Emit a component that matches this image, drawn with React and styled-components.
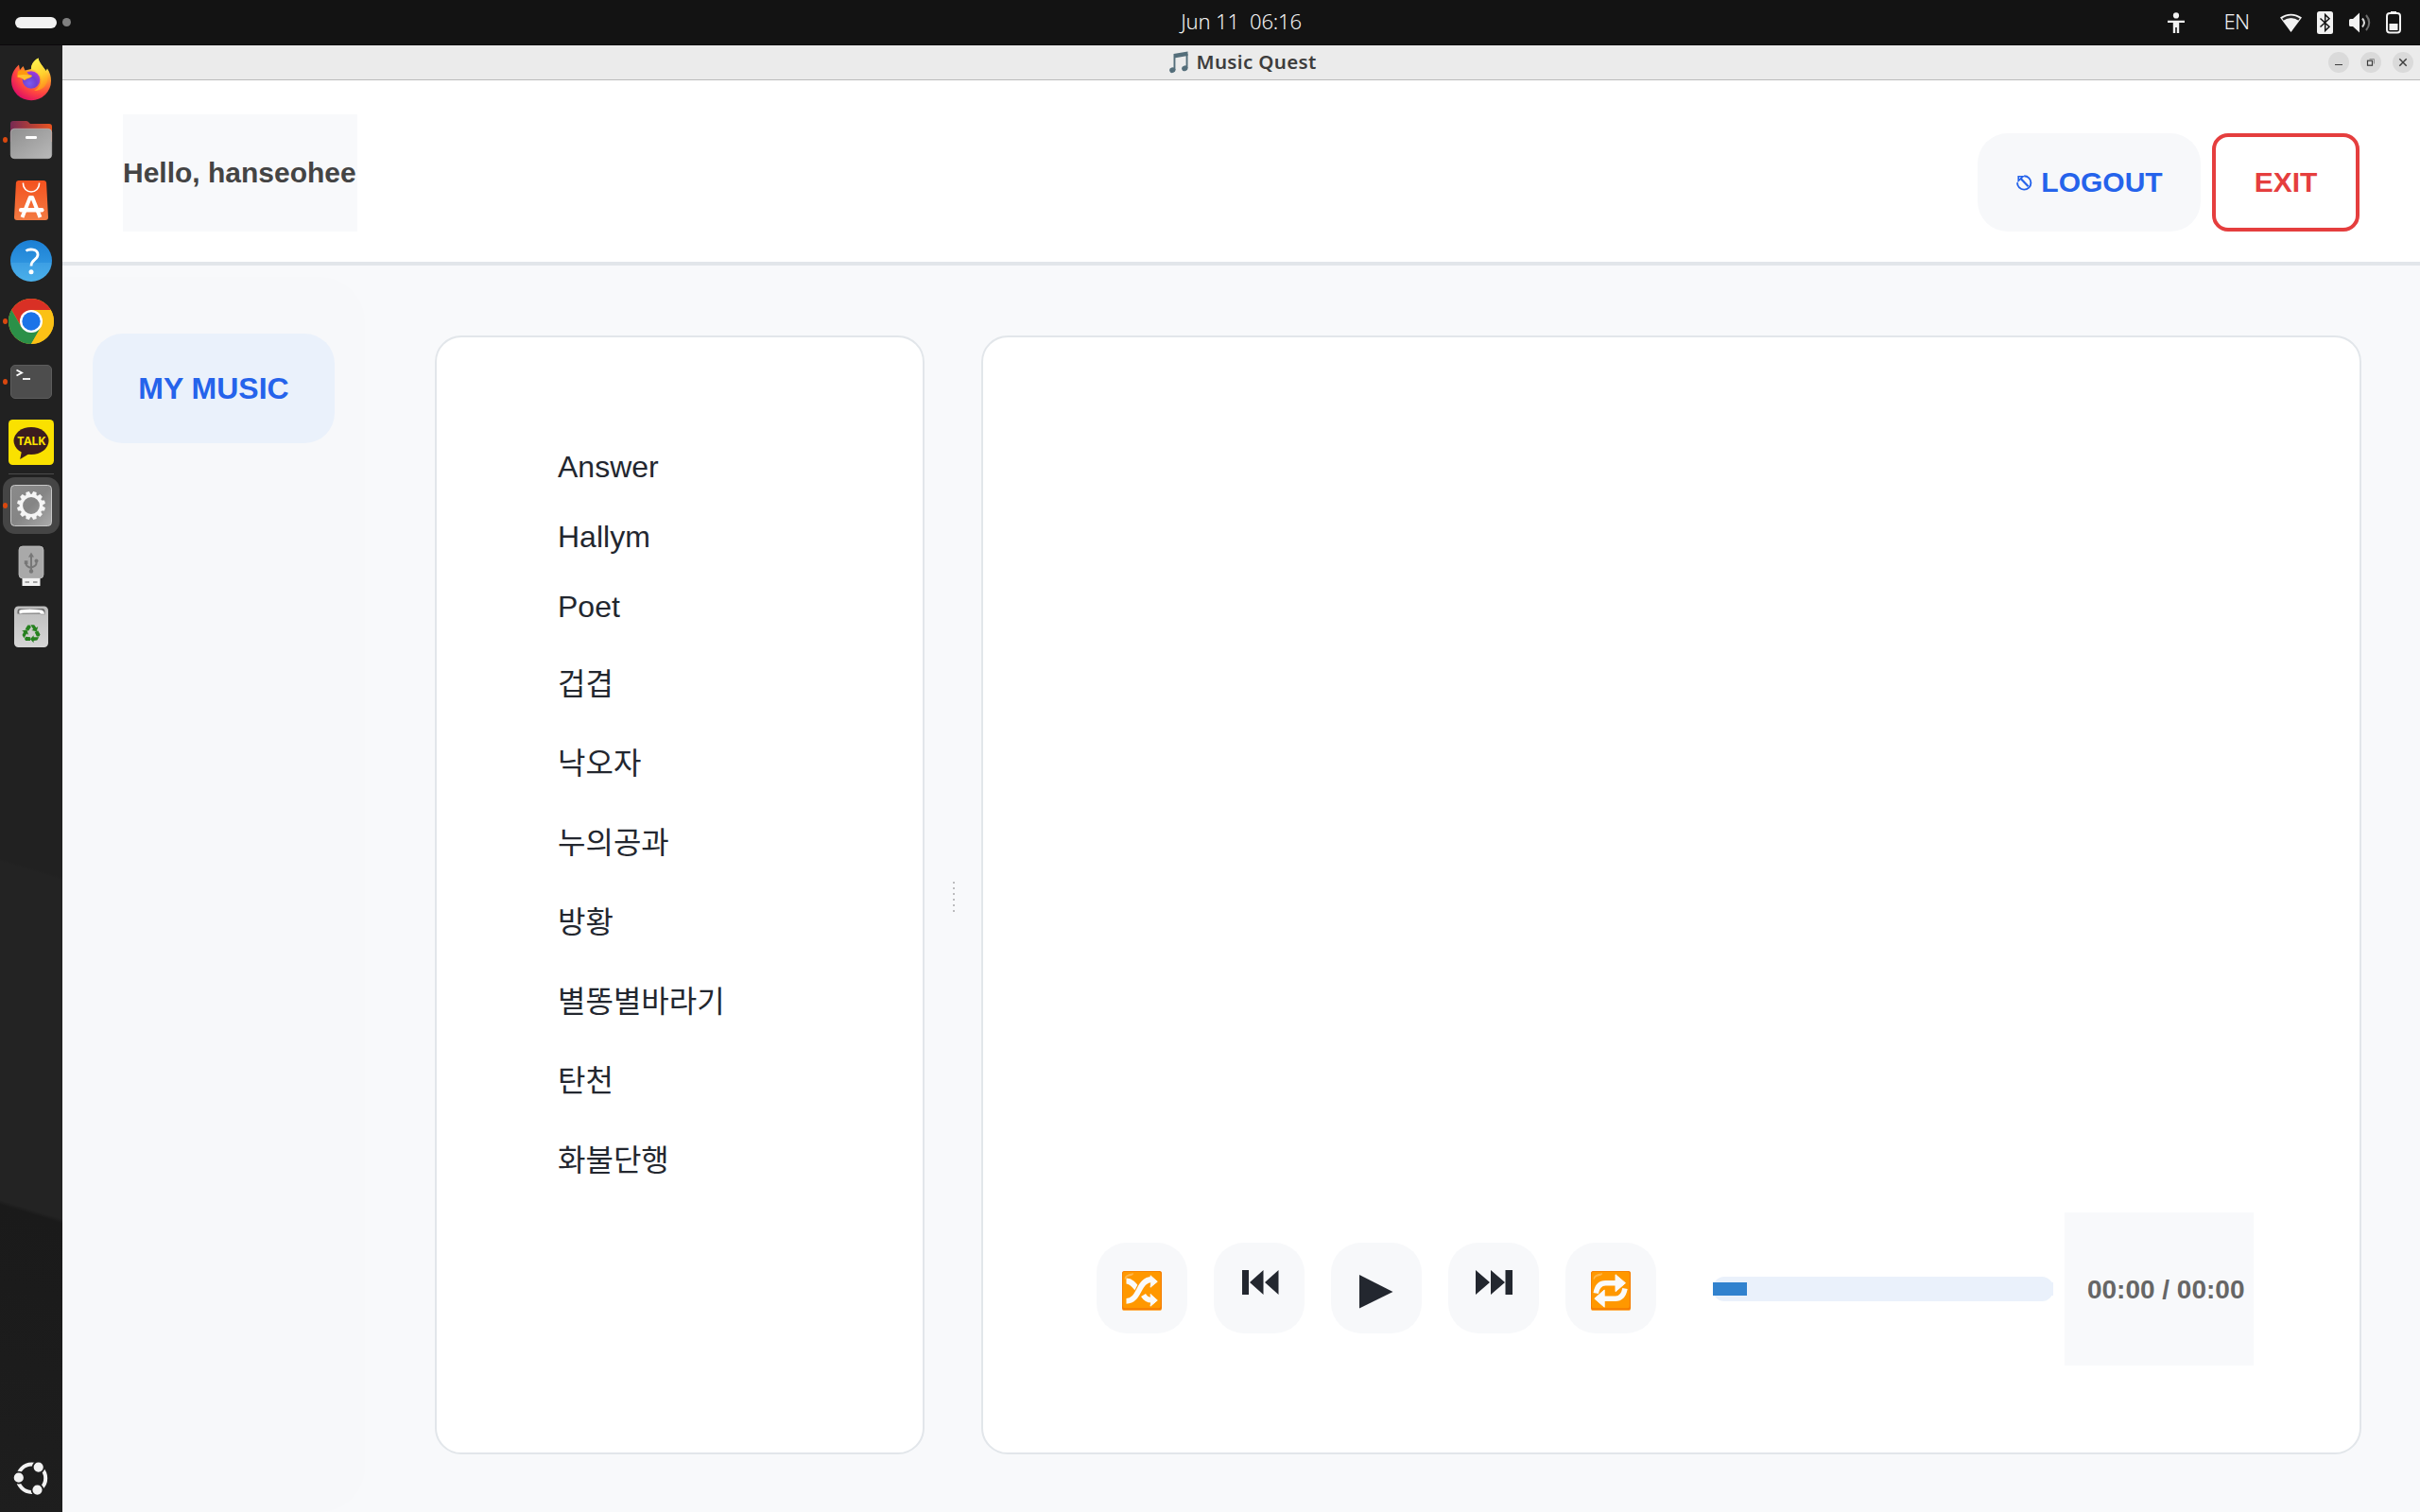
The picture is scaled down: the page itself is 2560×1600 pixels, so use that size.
import React from "react";
import styled, { createGlobalStyle } from "styled-components";

const GlobalStyle = createGlobalStyle`
  html, body, #root { margin: 0; height: 100%; }
  body { overflow: hidden; background: #f8f9fb; }
  * { box-sizing: border-box; }
  svg { display: block; flex: none; }
  button { font: inherit; padding: 0; border: 0; cursor: pointer; }
`;

const UI = `"Liberation Sans", "Noto Sans CJK KR", sans-serif`;
const SHELL = `"Noto Sans", "Open Sans", sans-serif`;

const Screen = styled.div`
  width: 2560px;
  height: 1600px;
  display: flex;
  flex-direction: column;
  font-family: ${UI};
`;

/* ---------- system bar ---------- */
const TopBar = styled.header`
  height: 48px;
  flex: none;
  display: grid;
  grid-template-columns: 1fr auto 1fr;
  align-items: center;
  background: #131313;
  border-bottom: 1px solid #0c080c;
  color: #f2f2f2;
  font-family: ${SHELL};
`;
const Workspaces = styled.div`
  display: flex;
  align-items: center;
  gap: 6px;
  padding-left: 16px;
`;
const ActiveSpace = styled.span`
  width: 44px;
  height: 12px;
  border-radius: 6px;
  background: #f2f2f2;
`;
const Space = styled.span`
  width: 9px;
  height: 9px;
  border-radius: 50%;
  background: #808080;
`;
const Clock = styled.time`
  width: 134px;
  margin-left: 66px;
  padding-bottom: 3px;
  font-size: 22px;
  line-height: 44px;
  font-weight: 300;
  letter-spacing: -0.15px;
  white-space: pre;
  text-align: center;
`;
const Tray = styled.div`
  display: flex;
  justify-content: flex-end;
  align-items: center;
  gap: 16.5px;
  padding-right: 20px;
`;
const Lang = styled.span`
  width: 26px;
  margin: 0 16.5px 0 25px;
  padding-bottom: 3px;
  font-size: 22px;
  font-weight: 300;
  line-height: 44px;
  letter-spacing: -0.6px;
`;

const Desktop = styled.div`
  flex: 1;
  min-height: 0;
  display: flex;
`;

/* ---------- dock ---------- */
const Dock = styled.nav`
  width: 66px;
  flex: none;
  display: flex;
  flex-direction: column;
  align-items: center;
  padding: 4px 0 4px;
  background: linear-gradient(197deg, #212121 0, #212121 56%, #232323 56.2%, #232323 79%, #1a1a1a 79.3%, #1e1e1e 100%);
`;
const Slot = styled.div`
  position: relative;
  width: 60px;
  height: ${(p) => (p.$active ? 60 : 64)}px;
  margin: ${(p) => (p.$active ? "2px 0" : 0)};
  flex: none;
  display: flex;
  align-items: center;
  justify-content: center;
  border-radius: 13px;
  background: ${(p) => (p.$active ? "#454545" : "transparent")};
`;
const RunDot = styled.i`
  position: absolute;
  left: 0;
  top: calc(50% - 3px);
  width: 5px;
  height: 6px;
  border-radius: 50%;
  background: #d9480f;
`;
const DockRule = styled.hr`
  width: 48px;
  height: 1px;
  margin: 1px 0;
  border: 0;
  background: #4c4c4c;
`;
const DockFill = styled.div`
  flex: 1;
`;

/* ---------- window ---------- */
const Window = styled.div`
  flex: 1;
  min-width: 0;
  display: flex;
  flex-direction: column;
  background: #f8f9fb;
`;
const TitleBar = styled.div`
  height: 37px;
  flex: none;
  display: grid;
  grid-template-columns: 1fr auto 1fr;
  align-items: center;
  background: #ebebeb;
  border-bottom: 1px solid #bababa;
  font-family: ${SHELL};
`;
const Title = styled.h1`
  grid-column: 2;
  display: flex;
  align-items: center;
  gap: 9px;
  width: 158px;
  margin: 0 0 0 5px;
  padding-bottom: 1px;
  font-size: 20.500px;
  line-height: 33px;
  font-weight: 600;
  letter-spacing: 0.35px;
  color: #3d3d3d;
  white-space: nowrap;
`;
const WindowButtons = styled.div`
  display: flex;
  justify-content: flex-end;
  gap: 12px;
  padding-right: 7px;
`;
const WindowButton = styled.button`
  width: 22px;
  height: 22px;
  border-radius: 50%;
  background: #dadada;
`;

const Header = styled.section`
  height: 196px;
  flex: none;
  display: flex;
  justify-content: space-between;
  align-items: flex-end;
  padding: 0 64px 32px;
  background: #fff;
  border-bottom: 4px solid #e2e6ea;
`;
const Greeting = styled.div`
  width: 248px;
  height: 124px;
  display: flex;
  align-items: center;
  background: #f8f9fb;
  color: #444;
  font-size: 30px;
  font-weight: 700;
  white-space: nowrap;
`;
const Actions = styled.div`
  display: flex;
  gap: 12px;
`;
const ActionButton = styled.button`
  height: 104px;
  width: ${(p) => (p.$danger ? 156 : 236)}px;
  display: flex;
  align-items: center;
  justify-content: center;
  gap: 8px;
  border: ${(p) => (p.$danger ? "4px solid #e53e3e" : "0")};
  border-radius: ${(p) => (p.$danger ? 17 : 32)}px;
  background: ${(p) => (p.$danger ? "#fff" : "#f7f8fa")};
  color: ${(p) => (p.$danger ? "#e53e3e" : "#2563eb")};
  font-size: 30px;
  font-weight: 700;
`;

const Body = styled.main`
  flex: 1;
  min-height: 0;
  display: flex;
`;
const Sidebar = styled.aside`
  width: 320px;
  flex: none;
  margin: 12px 0 0;
  padding: 60px 32px 0;
  border-radius: 0 48px 48px 0;
  background: #f7f8fa;
`;
const NavButton = styled.button`
  width: 256px;
  height: 116px;
  border-radius: 32px;
  background: #eaf1fb;
  color: #2563eb;
  font-size: 32px;
  font-weight: 700;
`;
const Splitter = styled.div`
  flex: 1;
  min-width: 0;
  display: flex;
  padding: 74px 62px 61px 74px;
`;
const Panel = styled.section`
  width: ${(p) => (p.$grow ? "auto" : "518px")};
  flex: ${(p) => (p.$grow ? "1" : "none")};
  min-width: 0;
  display: flex;
  flex-direction: column;
  justify-content: ${(p) => (p.$grow ? "flex-end" : "flex-start")};
  padding: ${(p) => (p.$grow ? "0 112px 92px 120px" : "100px 0 0 128px")};
  border: 2px solid #e2e6ea;
  border-radius: 28px;
  background: #fff;
`;
const Handle = styled.div`
  width: 60px;
  flex: none;
  display: flex;
  flex-direction: column;
  align-items: center;
  justify-content: center;
  gap: 4px;
  padding: 3px 0 0 2px;
`;
const Grip = styled.i`
  width: 2px;
  height: 2px;
  background: #bcbcbe;
`;
const Songs = styled.ul`
  list-style: none;
  margin: 0;
  padding: 0;
`;
const Song = styled.li`
  height: ${(p) => (p.$hangul ? 84 : 74.3)}px;
  display: flex;
  align-items: center;
  padding-bottom: ${(p) => (p.$hangul ? 2 : 0)}px;
  font-size: 32px;
  color: #23272f;
`;

/* ---------- player ---------- */
const Player = styled.div`
  height: 162px;
  display: flex;
  align-items: center;
`;
const Controls = styled.div`
  display: flex;
  gap: 28px;
  margin-bottom: 2px;
`;
const Control = styled.button`
  width: 96px;
  height: 96px;
  border-radius: 32px;
  background: #f7f8fa;
  display: flex;
  justify-content: flex-start;
  align-items: flex-start;
  padding-top: ${(p) => p.$top}px;
  padding-left: ${(p) => p.$left}px;
`;
const Track = styled.div`
  width: 360px;
  height: 26px;
  margin: 0 12px 0 60px;
  display: flex;
  align-items: center;
  background:
    linear-gradient(#eaf1fb, #eaf1fb) right center / 12px 14px no-repeat;
`;
const Rail = styled.div`
  flex: 1;
  height: 26px;
  display: flex;
  align-items: center;
  border-radius: 12px;
  background: #eaf1fb;
`;
const Chunk = styled.div`
  width: 36px;
  height: 14px;
  background: #3182ce;
`;
const Time = styled.div`
  width: 200px;
  height: 162px;
  display: flex;
  align-items: center;
  justify-content: flex-end;
  padding: 2px 9.5px 0 0;
  background: #f8f9fb;
  color: #666;
  font-size: 28px;
  font-weight: 700;
  white-space: nowrap;
`;

/* ---------- drawings ---------- */
const Person = () => (
  <svg width="18" height="24" viewBox="0 0 18 24" fill="#f2f2f2">
    <circle cx="9" cy="4.4" r="3.1" />
    <path d="M0 9.7h18v2.2h-5.800V23H9.800v-6H8.200v6H5.800V11.900H0z" />
  </svg>
);
const Wifi = () => (
  <svg width="23" height="24" viewBox="0 0 23 24">
    <path d="M0 6.600C6.500 1.400 16.500 1.400 23 6.600L11.500 22z" fill="#f2f2f2" />
    <path d="M2.200 7.600C8 3.500 15 3.500 20.800 7.600L19 10C14.500 6.500 8.500 6.500 4 10z" fill="#131313" opacity=".92" />
    <path d="M3.500 9.800C8.500 6.500 14.500 6.500 19.500 9.800L11.500 21.500z" fill="#f2f2f2" />
  </svg>
);
const Bluetooth = () => (
  <svg width="17" height="24" viewBox="0 0 17 24">
    <rect width="17" height="24" rx="2.500" fill="#f2f2f2" />
    <path d="M3.500 7.500 13 16.200 8.700 20.500V3.500L13 7.800 3.500 16.500" fill="none" stroke="#131313" strokeWidth="1.500" />
  </svg>
);
const Volume = () => (
  <svg width="23" height="24" viewBox="0 0 23 24" fill="none" strokeWidth="2">
    <path d="M0 9.500Q0 8 1.500 8H4L11 1.500v21L4 16H1.500Q0 16 0 14.500z" fill="#f2f2f2" />
    <path d="M14 7.500q4 4.500 0 9" stroke="#d8d8d8" />
    <path d="M18 4q6.500 8 0 16" stroke="#6d6d6d" />
  </svg>
);
const Battery = () => (
  <svg width="16" height="24" viewBox="0 0 16 24">
    <path d="M5 0h6v3H5z" fill="#f2f2f2" />
    <rect x="1" y="2" width="14" height="20.500" rx="3" fill="none" stroke="#f2f2f2" strokeWidth="2" />
    <path d="M3.500 13h9v7h-9z" fill="#f2f2f2" />
  </svg>
);
const Note = () => (
  <svg width="20" height="24" viewBox="0 0 20 24" fill="#546e7a">
    <path d="M4.500 3 19.500.500V5L6.400 7.200V20H4.500z" />
    <path d="M17.600 3h1.900v15h-1.900z" />
    <ellipse cx="3.300" cy="20.200" rx="3.200" ry="2.800" transform="rotate(-20 3.300 20.200)" />
    <ellipse cx="16.300" cy="18.300" rx="3.200" ry="2.800" transform="rotate(-20 16.300 18.300)" />
  </svg>
);
const WinGlyph = ({ kind }) => (
  <svg width="22" height="22" viewBox="0 0 22 22" fill="none" stroke="#3d3d3d">
    {kind === "min" && <path d="M7 13.500h8" />}
    {kind === "max" && (
      <>
        <path d="M9.500 7.500h5v5" stroke="#8f8f8f" />
        <rect x="7.500" y="9.200" width="5" height="5" strokeWidth="1.200" />
      </>
    )}
    {kind === "close" && <path d="M7.300 7.300l7.400 7.400M14.700 7.300l-7.400 7.400" strokeWidth="1.500" />}
  </svg>
);
const Escape = () => (
  <svg width="19" height="20" viewBox="0 0 19 20" fill="none" stroke="#2563eb" strokeWidth="1.900">
    <path d="M9.200 3.200A7.200 7.200 0 1 1 2 10.200" />
    <path d="M3.200 8.300V3.800H8z" strokeWidth="1.600" />
    <path d="M5.200 5.600 13.600 14.200" strokeWidth="2.200" />
  </svg>
);

const Firefox = () => (
  <svg width="48" height="48" viewBox="0 0 48 48">
    <defs>
      <radialGradient id="ffBody" cx=".78" cy=".12" r="1.050">
        <stop offset=".1" stopColor="#fff44f" />
        <stop offset=".38" stopColor="#ffa02a" />
        <stop offset=".68" stopColor="#ff4540" />
        <stop offset="1" stopColor="#d6006f" />
      </radialGradient>
      <linearGradient id="ffFlame" x1=".3" y1="0" x2=".6" y2="1">
        <stop offset="0" stopColor="#fff44f" />
        <stop offset=".55" stopColor="#ffd12e" />
        <stop offset="1" stopColor="#ff8a1c" />
      </linearGradient>
      <radialGradient id="ffGlobe" cx=".4" cy=".7" r=".8">
        <stop offset="0" stopColor="#7a5cf0" />
        <stop offset=".5" stopColor="#7040d0" />
        <stop offset="1" stopColor="#b833e1" />
      </radialGradient>
    </defs>
    <path d="M3 26C3 18 6 13 11 8.500L12 14 15.500 10 17.500 14.500 24 13C24 8 27 4 31.500 1.500 32 7 36 9 39.500 15L41 12.500C44 17 45 21 45 25.500A21 20.500 0 0 1 3 26z" fill="url(#ffBody)" />
    <path d="M31.500 1.500C26.500 4 23.500 9 24 13.500 31 14 34.500 18 34.500 24 34.500 30 31 34 27 36 36 36 41.500 30 41.500 22 41 13 33 9 31.500 1.500z" fill="url(#ffFlame)" />
    <circle cx="24" cy="24.500" r="9.300" fill="url(#ffGlobe)" />
    <path d="M10 15.500C14 13 19 14.500 21 18.500L25 20C24 23.500 20 22 17.500 25 16 22 12.500 22.500 9 21.500z" fill="#ff980e" />
    <path d="M10 19.500C15 18.500 20 19 25 20 22 23.500 19 22 16.500 25 15 22.500 12.500 22 10 21.500z" fill="#ffbd2e" />
  </svg>
);
const Files = () => (
  <svg width="48" height="48" viewBox="0 0 48 48">
    <defs>
      <linearGradient id="flBack"><stop offset="0" stopColor="#772953" /><stop offset="1" stopColor="#e95420" /></linearGradient>
      <linearGradient id="flFront" x1="0" y1="0" x2="1" y2="1"><stop offset="0" stopColor="#8f8f8f" /><stop offset="1" stopColor="#b9b9b9" /></linearGradient>
    </defs>
    <path d="M2 7q0-3 3-3h14q1.500 0 2.500 1.500L23 7h20q3 0 3 3v16H2z" fill="url(#flBack)" />
    <rect x="2.300" y="12.300" width="43.400" height="31.400" rx="4" fill="url(#flFront)" stroke="#c0c0c0" strokeWidth=".6" />
    <rect x="18" y="20" width="12" height="3" rx="1.200" fill="#fff" />
  </svg>
);
const Software = () => (
  <svg width="48" height="48" viewBox="0 0 48 48">
    <defs><linearGradient id="swBag" x1="0" y1="0" x2="0" y2="1"><stop offset="0" stopColor="#f4511e" /><stop offset="1" stopColor="#f37b43" /></linearGradient></defs>
    <path d="M10.500 3h27q2.500 0 2.600 2.500L42 42q0 3-3 3H9q-3 0-3-3L7.900 5.500Q8 3 10.500 3z" fill="url(#swBag)" />
    <path d="M15.500 5.500v1a8.500 8.500 0 0 0 17 0v-1" fill="none" stroke="#fff" strokeWidth="1.600" />
    <path d="M14.500 42 22.800 21h2.400L33.500 42" fill="none" stroke="#fff" strokeWidth="4" strokeLinejoin="round" />
    <rect x="11" y="32" width="26.500" height="4.500" rx="2.200" fill="#fff" />
  </svg>
);
const Help = () => (
  <svg width="48" height="48" viewBox="0 0 48 48">
    <defs><linearGradient id="hp" x1="0" y1="0" x2="0" y2="1"><stop offset="0" stopColor="#1b7fd4" /><stop offset=".54" stopColor="#2d93df" /><stop offset=".55" stopColor="#3d9fe4" /><stop offset="1" stopColor="#4bb0ea" /></linearGradient></defs>
    <circle cx="24" cy="24" r="22" fill="url(#hp)" />
    <path d="M18.500 13.500C21 11.500 31 10.500 31 17.500 31 23 24 22.500 24 29.500" fill="none" stroke="#fff" strokeWidth="2.800" />
    <circle cx="24" cy="35.700" r="2.500" fill="#fff" />
  </svg>
);
const Chrome = () => (
  <svg width="48" height="48" viewBox="0 0 48 48">
    <circle cx="24" cy="24" r="24" fill="#fbc116" />
    <path d="M3.220 12A24 24 0 0 1 44.780 12H24L13.600 30z" fill="#d93025" />
    <path d="M3.220 12A24 24 0 0 0 24 48L34.400 30 13.600 30z" fill="#2b9048" />
    <path d="M24 12H44.780A24 24 0 0 1 24 48L34.400 30z" fill="#fbc116" />
    <circle cx="24" cy="24" r="12" fill="#fff" />
    <circle cx="24" cy="24" r="9.700" fill="#1a73e8" />
  </svg>
);
const Terminal = () => (
  <svg width="48" height="48" viewBox="0 0 48 48" fill="none" stroke="#fff">
    <rect x="2.500" y="6.500" width="43" height="35" rx="4.500" fill="#4d4d4d" stroke="#5c5c5c" />
    <path d="M8.500 11.500 14 14.500 8.500 17.500" strokeWidth="1.900" />
    <path d="M15 21h8" strokeWidth="1.800" />
  </svg>
);
const KakaoBox = styled.div`
  position: relative;
  width: 48px;
  height: 48px;
`;
const KakaoText = styled.span`
  position: absolute;
  inset: 0;
  text-align: center;
  font: 700 12.500px/45px "Open Sans", sans-serif;
  letter-spacing: -0.4px;
  color: #fae100;
`;
const Kakao = () => (
  <KakaoBox>
    <svg width="48" height="48" viewBox="0 0 48 48">
      <rect width="48" height="48" rx="4.500" fill="#fae100" />
      <ellipse cx="24" cy="22.500" rx="18.500" ry="14.500" fill="#3b1c1e" />
      <path d="M14 33 12.200 42 22 36z" fill="#3b1c1e" />
    </svg>
    <KakaoText>TALK</KakaoText>
  </KakaoBox>
);
const Settings = () => (
  <svg width="48" height="48" viewBox="0 0 48 48">
    <defs><linearGradient id="st" x1="0" y1="0" x2="1" y2="1"><stop offset="0" stopColor="#8a8a8a" /><stop offset=".5" stopColor="#858585" /><stop offset="1" stopColor="#ababab" /></linearGradient></defs>
    <rect x="2.500" y="2.500" width="43" height="43" rx="4" fill="url(#st)" stroke="#c8c8c8" />
    <g fill="#f5f5f5">
      {Array.from({ length: 12 }, (_, i) => (
        <path key={i} d="M22.200 9h3.600l1 4.500h-5.600z" transform={`rotate(${i * 30 + 15} 24 24)`} />
      ))}
    </g>
    <circle cx="24" cy="24" r="10.600" fill="none" stroke="#f5f5f5" strokeWidth="3.400" />
  </svg>
);
const Usb = () => (
  <svg width="48" height="48" viewBox="0 0 48 48">
    <rect x="11" y="3" width="26" height="34" rx="4" fill="#a9a9a9" stroke="#bcbcbc" strokeWidth=".8" />
    <path d="M14.500 37h19v8h-19z" fill="#f2f2f2" />
    <path d="M17.500 41h4.500M26 41h4.500" stroke="#8a8a8a" strokeWidth="1.600" />
    <g fill="none" stroke="#777" strokeWidth="2">
      <path d="M24 13v16M18.500 19v2.500q0 3 5.500 4.500M29.500 18v3q0 3-5.500 4.500" />
    </g>
    <path d="M24 9.500 27 14.500H21zM16.800 18.300h3.600v3.600h-3.600z" fill="#777" />
    <circle cx="29.500" cy="18.500" r="2" fill="#777" />
    <circle cx="24" cy="29.500" r="2.200" fill="#777" />
  </svg>
);
const Trash = () => (
  <svg width="48" height="48" viewBox="0 0 48 48">
    <defs><linearGradient id="tr" x1="0" y1="0" x2="0" y2="1"><stop offset="0" stopColor="#bdbdbd" /><stop offset="1" stopColor="#d6d6d6" /></linearGradient></defs>
    <rect x="6" y="2.400" width="36" height="43.600" rx="4.500" fill="url(#tr)" />
    <path d="M9.500 10.500V8q0-3 3-3h23q3 0 3 3v2.500z" fill="#666" />
    <path d="M11.500 11q-1.500-5 2-5l9-.8 12 1q3.500.5 4 4.800H34l-1-1.200-18 .2z" fill="#fff" stroke="#888" strokeWidth=".6" />
    <g fill="#26811f">
      {[0, 120, 240].map((a) => (
        <g key={a} transform={`rotate(${a} 24 31.300)`}>
          <path d="M23.400 22.200H27.200L29.300 25.300 31.300 24.100 29.700 29.300 24.300 28.100 26.200 27z" />
          <path d="M20.300 22.400H22.600L23.900 24.600 21 28.700 17.800 26.600z" />
        </g>
      ))}
    </g>
  </svg>
);
const UbuntuLogo = () => (
  <svg width="48" height="48" viewBox="0 0 48 48">
    <circle cx="24.500" cy="24.300" r="14.700" fill="none" stroke="#f2f2f2" strokeWidth="4" />
    <g fill="#f2f2f2" stroke="#1e1e1e" strokeWidth="1.800">
      <circle cx="10.800" cy="23.700" r="6" />
      <circle cx="31.700" cy="12.600" r="6" />
      <circle cx="30.500" cy="36.600" r="6" />
    </g>
  </svg>
);

const EmojiTile = ({ children }) => (
  <svg width="42" height="42" viewBox="0 0 42 42">
    <rect width="42" height="42" rx="2.600" fill="#ffb04c" />
    <rect width="42" height="41" rx="2.600" fill="#f57c00" />
    <rect x=".8" y=".8" width="40" height="38.400" rx="2.200" fill="#ff9800" />
    <path d="M2.500 8.500Q2.500 3 12 2.300 12.500 4.500 8.500 5.300 4.500 6 3.800 8.700z" fill="#ffb547" />
    {children}
  </svg>
);
const Shuffle = () => (
  <EmojiTile>
    <g fill="none" stroke="#fafafa" strokeWidth="5.800">
      <path d="M4.500 10.500C10 10.500 13 15 16.500 19.500" />
      <path d="M22.500 25.500C25 29.500 27 30.700 31 30.700" />
      <path d="M4.500 31.800C19 31.800 16.500 9 31.500 9" stroke="#ff9800" strokeWidth="8" />
      <path d="M4.500 31.800C19 31.800 16.500 9 31.500 9" />
    </g>
    <g fill="#fafafa" stroke="#fafafa" strokeLinejoin="round">
      <path d="M30 4.800 37.300 11.200 30 17.200 31 11z" />
      <path d="M30 24.500 37.300 31 30 37.200 31 31z" />
    </g>
  </EmojiTile>
);
const Repeat = () => (
  <EmojiTile>
    <g fill="none" stroke="#fafafa" strokeWidth="5.500">
      <path d="M27 12.700H15.500Q7 12.700 5.200 23.500" />
      <path d="M14 29.200H26Q34 29.200 36 18.500" />
    </g>
    <g fill="#fafafa" stroke="#fafafa" strokeLinejoin="round">
      <path d="M26 3.800 36.500 12.700 26 21.700z" />
      <path d="M14.200 20 3.800 29.200 14.200 38.200z" />
    </g>
  </EmojiTile>
);
const Previous = () => (
  <svg width="39" height="26" viewBox="0 0 39 26" fill="#23272f">
    <path d="M0 0h7v26H0zM22.500 0v26L8 13zM38.500 0v26L24 13z" />
  </svg>
);
const Next = () => (
  <svg width="39" height="26" viewBox="0 0 39 26" fill="#23272f">
    <path d="M0 0 15 13 0 26zM16 0 31 13 16 26zM31.500 0h7.500v26h-7.500z" />
  </svg>
);
const Play = () => (
  <svg width="36" height="36" viewBox="0 0 36 36" fill="#23272f">
    <path d="M0 0 35.500 18 0 35.500z" />
  </svg>
);

const songs = ["Answer", "Hallym", "Poet", "겁겹", "낙오자", "누의공과", "방황", "별똥별바라기", "탄천", "화불단행"];

const apps = [
  { Icon: Firefox },
  { Icon: Files, running: true },
  { Icon: Software },
  { Icon: Help },
  { Icon: Chrome, running: true },
  { Icon: Terminal, running: true },
  { Icon: Kakao },
];
const extras = [{ Icon: Settings, running: true, active: true }, { Icon: Usb }, { Icon: Trash }];

const DockItem = ({ Icon, running, active }) => (
  <Slot $active={active}>
    {running && <RunDot />}
    <Icon />
  </Slot>
);

export default function App() {
  return (
    <Screen>
      <GlobalStyle />
      <TopBar>
        <Workspaces>
          <ActiveSpace />
          <Space />
        </Workspaces>
        <Clock>{"Jun 11  06:16"}</Clock>
        <Tray>
          <Person />
          <Lang>EN</Lang>
          <Wifi />
          <Bluetooth />
          <Volume />
          <Battery />
        </Tray>
      </TopBar>
      <Desktop>
        <Dock>
          {apps.map((a, i) => <DockItem key={i} {...a} />)}
          <DockRule />
          {extras.map((a, i) => <DockItem key={i} {...a} />)}
          <DockFill />
          <DockItem Icon={UbuntuLogo} />
        </Dock>
        <Window>
          <TitleBar>
            <Title><Note />Music Quest</Title>
            <WindowButtons>
              {["min", "max", "close"].map((k) => (
                <WindowButton key={k} aria-label={k}><WinGlyph kind={k} /></WindowButton>
              ))}
            </WindowButtons>
          </TitleBar>
          <Header>
            <Greeting>Hello, hanseohee</Greeting>
            <Actions>
              <ActionButton><Escape />LOGOUT</ActionButton>
              <ActionButton $danger>EXIT</ActionButton>
            </Actions>
          </Header>
          <Body>
            <Sidebar>
              <NavButton>MY MUSIC</NavButton>
            </Sidebar>
            <Splitter>
              <Panel>
                <Songs>
                  {songs.map((s) => (
                    <Song key={s} $hangul={/[가-힣]/.test(s)}>{s}</Song>
                  ))}
                </Songs>
              </Panel>
              <Handle>
                {Array.from({ length: 6 }, (_, i) => <Grip key={i} />)}
              </Handle>
              <Panel $grow>
                <Player>
                  <Controls>
                    <Control $top={30} $left={26.5} aria-label="shuffle"><Shuffle /></Control>
                    <Control $top={29} $left={29.5} aria-label="previous"><Previous /></Control>
                    <Control $top={34} $left={30} aria-label="play"><Play /></Control>
                    <Control $top={29} $left={29} aria-label="next"><Next /></Control>
                    <Control $top={30} $left={26.5} aria-label="repeat"><Repeat /></Control>
                  </Controls>
                  <Track><Rail><Chunk /></Rail></Track>
                  <Time>00:00 / 00:00</Time>
                </Player>
              </Panel>
            </Splitter>
          </Body>
        </Window>
      </Desktop>
    </Screen>
  );
}
